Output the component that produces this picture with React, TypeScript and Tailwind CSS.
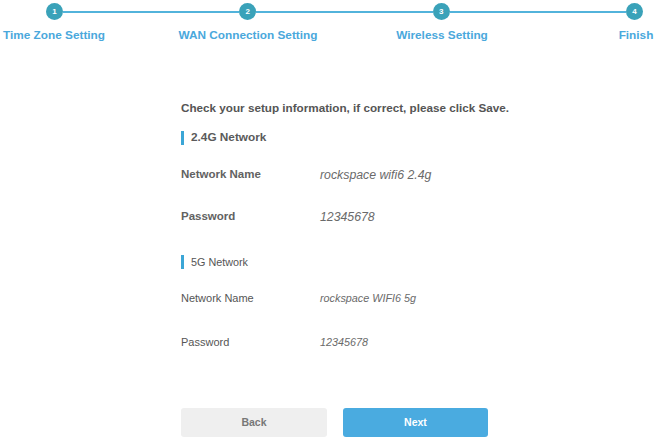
const steps = ['Time Zone Setting', 'WAN Connection Setting', 'Wireless Setting', 'Finish'];

function Row({ label, value, small }: { label: string; value: string; small?: boolean }) {
  return (
    <div className={`flex items-center h-[14px] ${small ? 'text-[11px]' : 'text-[12px]'}`}>
      <div className={`w-[139px] ${small ? 'font-normal text-[#555]' : 'font-semibold text-[11.5px] text-[#626262]'}`}>{label}</div>
      <div className={`italic text-[#6a6a6a] ${small ? 'text-[10.8px]' : 'text-[12.3px]'}`}>{value}</div>
    </div>
  );
}

export default function App() {
  return (
    <div
      className="w-[655px] h-[440px] bg-white overflow-hidden"
      style={{ fontFamily: '"Liberation Sans", Arial, sans-serif' }}
    >
      {/* stepper */}
      <div className="flex items-center pt-[3px] pl-[46px] pr-[12px]">
        {[1, 2, 3, 4].map((n) => (
          <div key={n} className={`flex items-center ${n < 4 ? 'flex-1' : ''}`}>
            <div className="w-[17px] h-[17px] rounded-full bg-[#3aa2b9] text-white text-[8px] font-bold flex items-center justify-center">
              {n}
            </div>
            {n < 4 && <div className="flex-1 h-[2px] bg-[#52b3db]" />}
          </div>
        ))}
      </div>
      <div className="flex ml-[-43px] mt-[8px] h-[14px]">
        {steps.map((s) => (
          <div key={s} className="w-[194px] shrink-0 text-center text-[11.8px] font-bold text-[#4aa8dc] leading-[14px]">
            {s}
          </div>
        ))}
      </div>

      {/* summary */}
      <div className="pl-[181px]">
        <div className="mt-[59px] h-[14px] flex items-center text-[11.7px] font-bold text-[#555]">
          Check your setup information, if correct, please click Save.
        </div>

        <div className="mt-[16px] h-[14px] flex items-center gap-[7px]">
          <div className="w-[3px] h-[14px] bg-[#3ba6d6]" />
          <span className="text-[11.8px] font-semibold text-[#5a5a5a]">2.4G Network</span>
        </div>
        <div className="mt-[23px]">
          <Row label="Network Name" value="rockspace wifi6 2.4g" />
        </div>
        <div className="mt-[28px]">
          <Row label="Password" value="12345678" />
        </div>

        <div className="mt-[31px] h-[14px] flex items-center gap-[7px]">
          <div className="w-[3px] h-[14px] bg-[#3ba6d6]" />
          <span className="text-[10.8px] text-[#555]">5G Network</span>
        </div>
        <div className="mt-[22px]">
          <Row label="Network Name" value="rockspace WIFI6 5g" small />
        </div>
        <div className="mt-[30px]">
          <Row label="Password" value="12345678" small />
        </div>

        <div className="mt-[59px] flex gap-[16px]">
          <button className="w-[146px] h-[29px] rounded-[3px] bg-[#efefef] text-[#777] text-[10.5px] font-bold">
            Back
          </button>
          <button className="w-[145px] h-[29px] rounded-[3px] bg-[#4aabe0] text-white text-[10.5px] font-bold">
            Next
          </button>
        </div>
      </div>
    </div>
  );
}
